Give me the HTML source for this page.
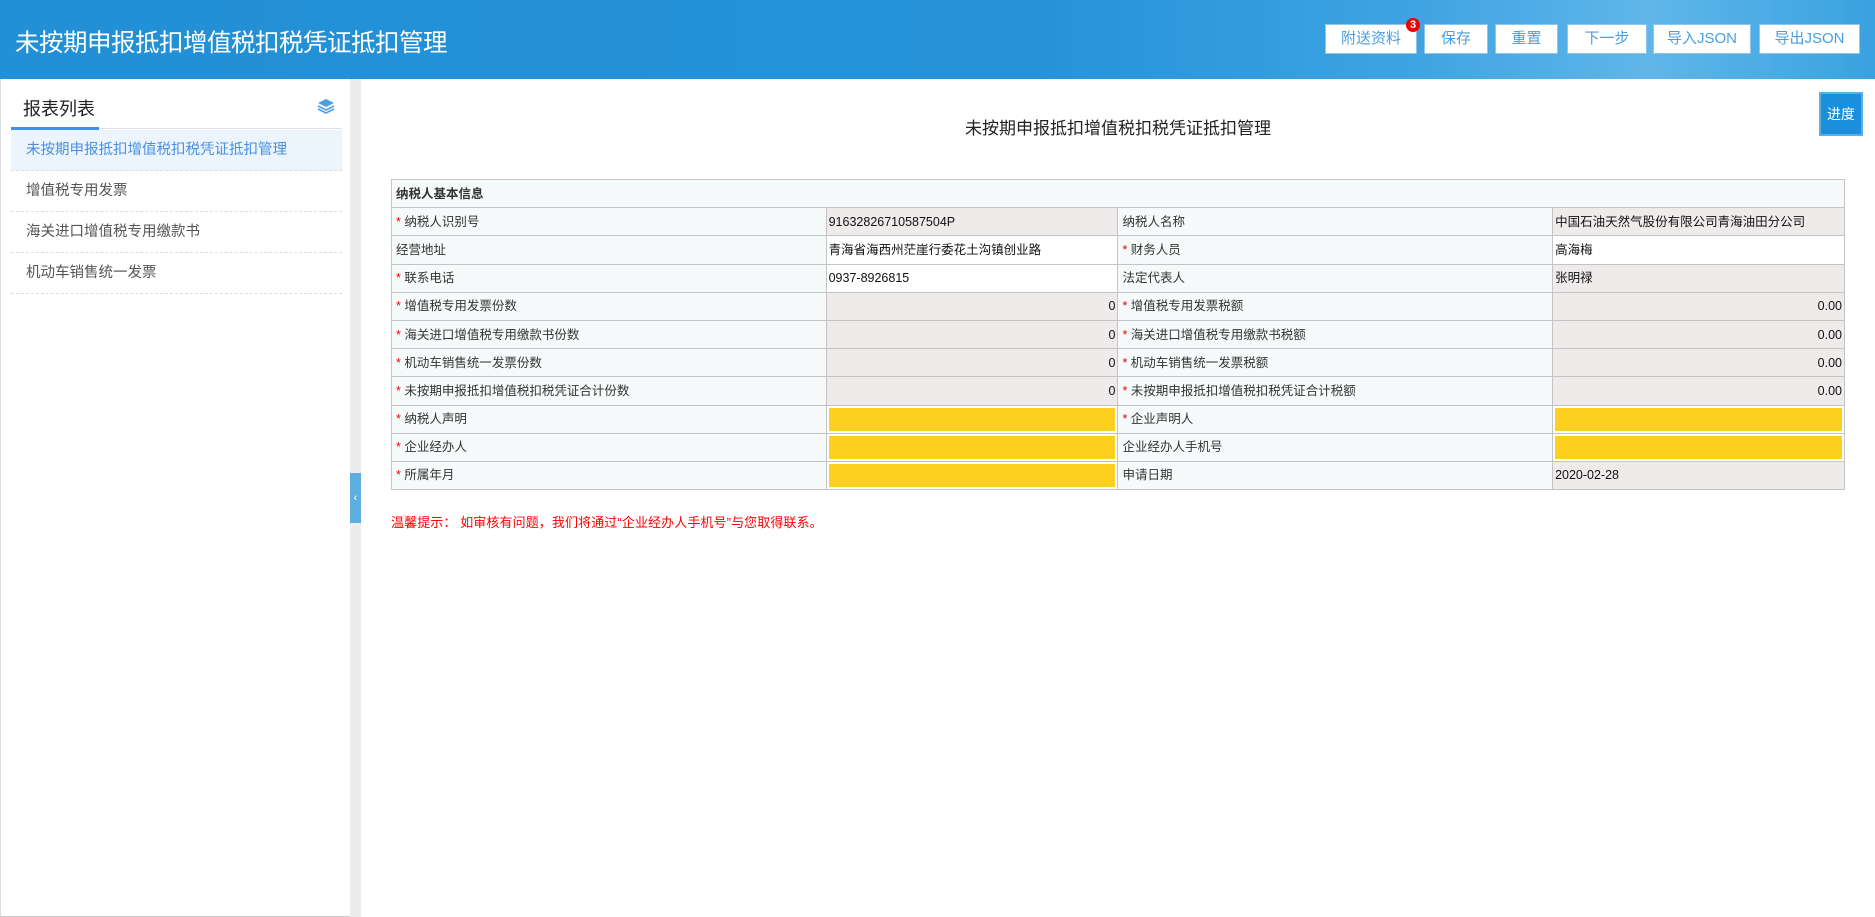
<!DOCTYPE html>
<html><head><meta charset="utf-8"><style>
*{margin:0;padding:0;box-sizing:border-box}
body{width:1875px;height:917px;overflow:hidden;background:#fff;font-family:"Liberation Sans","Noto Sans CJK SC",sans-serif;position:relative}
.hdr{position:absolute;left:0;top:0;width:1875px;height:79px;background:linear-gradient(90deg,#2290d6 0%,#2592d8 55%,#3ea3e2 75%,#5fb6ea 88%,#3aa2e0 100%)}
.hdr h1{position:absolute;left:15px;top:24px;font-size:24.5px;font-weight:normal;color:#fff;letter-spacing:-0.5px}
.btn{position:absolute;top:24px;height:30px;background:#fff;border:1px solid #8cc6ee;color:#4a9ee0;font-size:15px;text-align:center;line-height:28px}
.badge{position:absolute;left:1406px;top:18px;width:14px;height:14px;border-radius:50%;background:#e00;color:#fff;font-size:11px;text-align:center;line-height:14px;font-weight:bold}
.side{position:absolute;left:0;top:79px;width:350px;height:838px;border-left:1px solid #ddd;border-bottom:1px solid #ccc}
.scroll{position:absolute;left:350px;top:79px;width:11px;height:838px;background:#ececec}
.tab{position:absolute;left:350px;top:473px;width:11px;height:50px;background:#5eaee2;color:#fff;font-size:11px;text-align:center;line-height:50px}
.st{position:absolute;left:23px;top:95px;font-size:18px;color:#222}
.ul{position:absolute;left:11px;top:128px;width:331px;height:1px;background:#dde3ea}
.ulb{position:absolute;left:11px;top:127px;width:88px;height:3px;background:#3d8ef0}
.it{position:absolute;left:11px;width:331px;height:41px;border-bottom:1px dashed #ddd;font-size:14.5px;color:#555;padding-left:15px;line-height:40px}
.main-t{position:absolute;left:361px;width:1514px;text-align:center;top:114px;font-size:17px;color:#222}
.jd{position:absolute;left:1819px;top:92px;width:44px;height:44px;background:#1a8fdb;border:2px solid #5caee8;color:#fff;font-size:14px;text-align:center;line-height:40px}
table{position:absolute;left:391px;top:179px;width:1454px;border-collapse:collapse;font-size:12.5px;color:#333}
td{border:1px solid #c4c4c4;height:28.2px;padding:0 4px;background:#f7fafb;white-space:nowrap;vertical-align:middle;line-height:16px}
td.v{background:#efebeb;color:#111;padding:0 2px}
td.w{background:#fff;color:#111;padding:0 2px}
td.r{text-align:right}
td.y{padding:2px 2px;background:#fff}
td.y div{background:#fdd01f;height:23px}
b.s{color:#e00;font-weight:normal}
.tip{position:absolute;left:391px;top:512px;font-size:13px;color:#f00;letter-spacing:0.1px}
</style></head><body>
<div class="hdr"><h1>未按期申报抵扣增值税扣税凭证抵扣管理</h1></div>
<div class="btn" style="left:1325px;width:92px">附送资料</div>
<div class="badge">3</div>
<div class="btn" style="left:1424px;width:64px">保存</div>
<div class="btn" style="left:1495px;width:63px">重置</div>
<div class="btn" style="left:1567px;width:80px">下一步</div>
<div class="btn" style="left:1653px;width:98px">导入JSON</div>
<div class="btn" style="left:1759px;width:101px">导出JSON</div>
<div class="side"></div>
<div class="st">报表列表</div>
<svg style="position:absolute;left:317px;top:98px" width="18" height="16" viewBox="0 0 18 16"><path d="M9 1L17 5L9 9L1 5Z" fill="#4a9ee8"/><path d="M1 8L9 12L17 8M1 11L9 15L17 11" fill="none" stroke="#4a9ee8" stroke-width="1.6"/></svg>
<div class="ul"></div><div class="ulb"></div>
<div class="it" style="top:130px;background:#ecf4fd;color:#4a90e2">未按期申报抵扣增值税扣税凭证抵扣管理</div>
<div class="it" style="top:171px">增值税专用发票</div>
<div class="it" style="top:212px">海关进口增值税专用缴款书</div>
<div class="it" style="top:253px">机动车销售统一发票</div>
<div class="scroll"></div><div class="tab">‹</div>
<div class="main-t">未按期申报抵扣增值税扣税凭证抵扣管理</div>
<div class="jd">进度</div>
<table>
<colgroup><col style="width:435px"><col style="width:292px"><col style="width:435px"><col style="width:292px"></colgroup>
<tr><td colspan="4"><strong>纳税人基本信息</strong></td></tr>
<tr><td><b class="s">*</b> 纳税人识别号</td><td class="v">91632826710587504P</td><td>纳税人名称</td><td class="v">中国石油天然气股份有限公司青海油田分公司</td></tr>
<tr><td>经营地址</td><td class="w">青海省海西州茫崖行委花土沟镇创业路</td><td><b class="s">*</b> 财务人员</td><td class="w">高海梅</td></tr>
<tr><td><b class="s">*</b> 联系电话</td><td class="w">0937-8926815</td><td>法定代表人</td><td class="v">张明禄</td></tr>
<tr><td><b class="s">*</b> 增值税专用发票份数</td><td class="v r">0</td><td><b class="s">*</b> 增值税专用发票税额</td><td class="v r">0.00</td></tr>
<tr><td><b class="s">*</b> 海关进口增值税专用缴款书份数</td><td class="v r">0</td><td><b class="s">*</b> 海关进口增值税专用缴款书税额</td><td class="v r">0.00</td></tr>
<tr><td><b class="s">*</b> 机动车销售统一发票份数</td><td class="v r">0</td><td><b class="s">*</b> 机动车销售统一发票税额</td><td class="v r">0.00</td></tr>
<tr><td><b class="s">*</b> 未按期申报抵扣增值税扣税凭证合计份数</td><td class="v r">0</td><td><b class="s">*</b> 未按期申报抵扣增值税扣税凭证合计税额</td><td class="v r">0.00</td></tr>
<tr><td><b class="s">*</b> 纳税人声明</td><td class="y"><div></div></td><td><b class="s">*</b> 企业声明人</td><td class="y"><div></div></td></tr>
<tr><td><b class="s">*</b> 企业经办人</td><td class="y"><div></div></td><td>企业经办人手机号</td><td class="y"><div></div></td></tr>
<tr><td><b class="s">*</b> 所属年月</td><td class="y"><div></div></td><td>申请日期</td><td class="v">2020-02-28</td></tr>
</table>
<div class="tip">温馨提示： 如审核有问题，我们将通过“企业经办人手机号”与您取得联系。</div>
</body></html>
